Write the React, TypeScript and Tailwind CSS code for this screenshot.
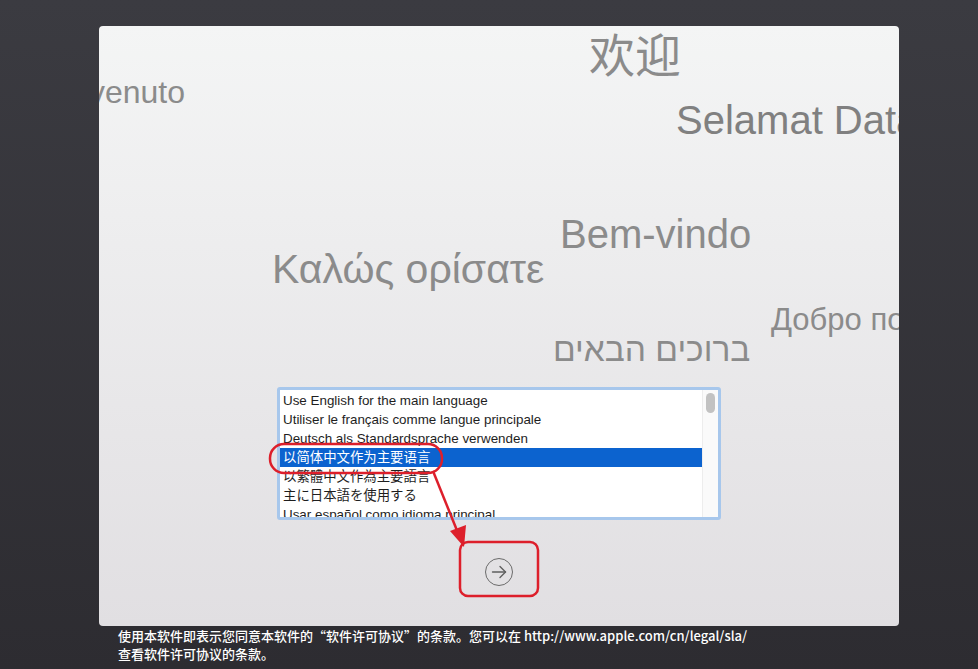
import React from 'react';

const languages = [
  'Use English for the main language',
  'Utiliser le français comme langue principale',
  'Deutsch als Standardsprache verwenden',
  '以简体中文作为主要语言',
  '以繁體中文作為主要語言',
  '主に日本語を使用する',
  'Usar español como idioma principal',
];

const greetings = [
  { text: '欢迎', cls: 'left-[490px] top-[3px] text-[46px]' },
  { text: 'Benvenuto', cls: 'left-[-67px] top-[47px] text-[32px]' },
  { text: 'Selamat Datang', cls: 'left-[577px] top-[70px] text-[40px] text-[#808080]' },
  { text: 'Bem-vindo', cls: 'left-[461px] top-[184px] text-[40px]' },
  { text: 'Καλώς ορίσατε', cls: 'left-[173px] top-[219px] text-[41px]' },
  { text: 'Добро пожаловать', cls: 'left-[672px] top-[275px] text-[31px] text-[#7f7f7f]' },
  { text: 'ברוכים הבאים', cls: 'left-[454px] top-[304px] text-[33.5px]' },
];

function ListBox() {
  return (
    <div className="w-[444px] h-[133px] border-[3px] border-[#a7c7ec] rounded-[3px] bg-white flex overflow-hidden">
      <div className="flex-1 pt-px">
        {languages.map((l, i) => (
          <div
            key={l}
            className={`h-[19px] pl-[3px] text-[13.4px] leading-[19px] whitespace-nowrap ${i === 3 ? 'bg-[#0c63cf] text-white' : 'text-[#1e1e1e]'}`}
          >
            {l}
          </div>
        ))}
      </div>
      <div className="w-[16px] bg-[#fafafa] border-l border-[#ededed] pt-[3px] flex justify-center">
        <div className="w-[9px] h-[20px] rounded-full bg-[#c2c2c2]" />
      </div>
    </div>
  );
}

export default function App() {
  return (
    <div
      className="relative w-[978px] h-[669px] overflow-hidden bg-gradient-to-b from-[#3b3b41] to-[#2d2c31]"
      style={{ fontFamily: '"Liberation Sans", "Noto Sans CJK SC", sans-serif' }}
    >
      <div className="pt-[26px] pl-[99px]">
        <div className="relative w-[800px] h-[600px] rounded-[4px] overflow-hidden bg-gradient-to-b from-[#f4f5f5] to-[#e1dfe2]">
          {greetings.map((g) => (
            <div key={g.text} className={`absolute whitespace-nowrap leading-[1.2] text-[#8b8b8b] ${g.cls}`}>
              {g.text}
            </div>
          ))}
          <div className="relative flex flex-col items-center pt-[361px]">
            <ListBox />
            <div className="mt-[38px] w-[28px] h-[28px] rounded-full border-[1.5px] border-[#6b6b6b] flex items-center justify-center">
              <svg width="18" height="18" viewBox="0 0 18 18" fill="none" stroke="#5f5f5f" strokeWidth="1.4" strokeLinecap="round" strokeLinejoin="round">
                <path d="M2.5 9h13" />
                <path d="M10 3.5 15.5 9 10 14.5" />
              </svg>
            </div>
          </div>
        </div>
      </div>

      <div
        className="pl-[118px] pt-[1px] text-[13px] leading-[18px] font-medium text-white"
        style={{ fontFamily: '"Noto Sans CJK SC", "Noto Sans", sans-serif' }}
      >
        <div>使用本软件即表示您同意本软件的“软件许可协议”的条款。您可以在 http://www.apple.com/cn/legal/sla/</div>
        <div>查看软件许可协议的条款。</div>
      </div>

      {/* red annotation marks */}
      <svg className="absolute inset-0 pointer-events-none" width="978" height="669" fill="none">
        <rect x="270" y="444" width="172" height="29" rx="14" stroke="#dd1f2b" strokeWidth="2.5" />
        <path d="M433 471 458 533" stroke="#dd1f2b" strokeWidth="2.5" />
        <polygon points="464,547 450,531 466,525" fill="#dd1f2b" />
        <rect x="460" y="542" width="78" height="54" rx="8" stroke="#dd1f2b" strokeWidth="2.5" />
      </svg>
    </div>
  );
}
